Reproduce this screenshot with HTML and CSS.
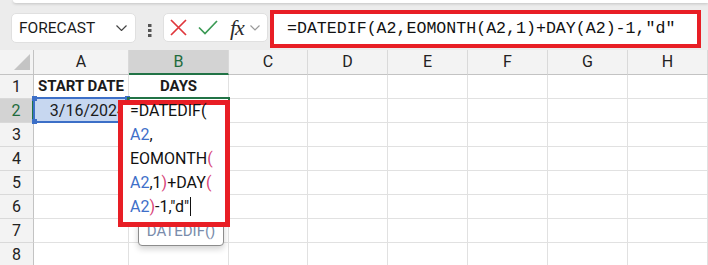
FILE: index.html
```html
<!DOCTYPE html>
<html lang="en">
<head>
<meta charset="UTF-8">
<title>DATEDIF days left in month</title>
<link rel="stylesheet" href="styles.css">
</head>
<body>
    <div class="top-edge"></div>
    <div class="formula-bar">
        <div class="name-box">
            <span>FORECAST</span>
            <svg class="chevron" width="11" height="6" viewBox="0 0 11 6"><path d="M0.5 0.5 L5.5 5.5 L10.5 0.5" fill="none" stroke="#444" stroke-width="1.2"/></svg>
        </div>
        <div class="grip">
            <svg width="4" height="13" viewBox="0 0 4 13"><rect x="0" y="0" width="3.5" height="3" fill="#555"/><rect x="0" y="5" width="3.5" height="3" fill="#555"/><rect x="0" y="10" width="3.5" height="3" fill="#555"/></svg>
        </div>
        <div class="fx-buttons">
            <svg class="btn-cancel" width="17" height="17" viewBox="0 0 17 17"><path d="M1 1 L16 16 M16 1 L1 16" stroke="#e0363c" stroke-width="1.7"/></svg>
            <svg class="btn-enter" width="20" height="15" viewBox="0 0 20 15"><path d="M1 7.5 L7 13.5 L19 1" fill="none" stroke="#3b9a55" stroke-width="1.7"/></svg>
            <span class="fx">fx</span>
            <svg class="chevron light" width="10" height="6" viewBox="0 0 10 6"><path d="M0.5 0.5 L5 5 L9.5 0.5" fill="none" stroke="#9a9a9a" stroke-width="1.2"/></svg>
        </div>
        <div class="formula-input">=DATEDIF(A2,EOMONTH(A2,1)+DAY(A2)-1,"d"</div>
    </div>

    <div class="sheet">
        <div class="corner">
            <svg width="16" height="16" viewBox="0 0 16 16"><polygon points="16,0 16,16 0,16" fill="#c4c4c4"/></svg>
        </div>
        <div class="col-head">A</div>
        <div class="col-head sel">B</div>
        <div class="col-head">C</div>
        <div class="col-head">D</div>
        <div class="col-head">E</div>
        <div class="col-head">F</div>
        <div class="col-head">G</div>
        <div class="col-head">H</div>

        <div class="row-head">1</div>
        <div class="cell title">START DATE</div>
        <div class="cell title">DAYS</div>
        <div class="cell"></div><div class="cell"></div><div class="cell"></div><div class="cell"></div><div class="cell"></div><div class="cell"></div>

        <div class="row-head sel">2</div>
        <div class="cell date">3/16/2024</div>
        <div class="cell"></div>
        <div class="cell"></div><div class="cell"></div><div class="cell"></div><div class="cell"></div><div class="cell"></div><div class="cell"></div>

        <div class="row-head">3</div>
        <div class="cell"></div><div class="cell"></div><div class="cell"></div><div class="cell"></div><div class="cell"></div><div class="cell"></div><div class="cell"></div><div class="cell"></div>
        <div class="row-head">4</div>
        <div class="cell"></div><div class="cell"></div><div class="cell"></div><div class="cell"></div><div class="cell"></div><div class="cell"></div><div class="cell"></div><div class="cell"></div>
        <div class="row-head">5</div>
        <div class="cell"></div><div class="cell"></div><div class="cell"></div><div class="cell"></div><div class="cell"></div><div class="cell"></div><div class="cell"></div><div class="cell"></div>
        <div class="row-head">6</div>
        <div class="cell"></div><div class="cell"></div><div class="cell"></div><div class="cell"></div><div class="cell"></div><div class="cell"></div><div class="cell"></div><div class="cell"></div>
        <div class="row-head">7</div>
        <div class="cell"></div><div class="cell"></div><div class="cell"></div><div class="cell"></div><div class="cell"></div><div class="cell"></div><div class="cell"></div><div class="cell"></div>
        <div class="row-head">8</div>
        <div class="cell"></div><div class="cell"></div><div class="cell"></div><div class="cell"></div><div class="cell"></div><div class="cell"></div><div class="cell"></div><div class="cell"></div>

        <!-- overlays: reference highlight, active cell, in-cell editor, hint -->
        <div class="ref-box">
            <span class="handle tl"></span><span class="handle tr"></span>
            <span class="handle bl"></span><span class="handle br"></span>
        </div>
        <div class="active-cell"></div>
        <div class="hint">DATEDIF()</div>
        <div class="editor">
            <div class="editor-text">
                <div>=DATEDIF(</div>
                <div><span class="ref">A2</span>,</div>
                <div>EOMONTH<span class="paren">(</span></div>
                <div><span class="ref">A2</span>,1<span class="paren">)</span>+DAY<span class="paren">(</span></div>
                <div><span class="ref">A2</span><span class="paren">)</span>-1,"d"<span class="caret"></span></div>
            </div>
        </div>
    </div>
</body>
</html>
```

FILE: styles.css
```css
body {
    margin: 0;
    width: 708px;
    height: 265px;
    overflow: hidden;
    background-color: #ececec;
    font-family: Roboto, "Liberation Sans", sans-serif;
    color: #1b1b1b;
}
.top-edge {
    height: 3px;
    margin-left: 13px;
    background-color: #fff;
    border-bottom-left-radius: 6px;
    box-shadow: 0 1px 3px rgba(0, 0, 0, .18);
}
.formula-bar {
    height: 47px;
    display: flex;
    align-items: flex-start;
}
.name-box {
    margin: 10px 0 0 11px;
    width: 125px;
    height: 30px;
    box-sizing: border-box;
    background-color: #fff;
    border: 1px solid #e0e0e0;
    border-radius: 5px;
    display: flex;
    align-items: center;
    justify-content: space-between;
    padding: 0 8px 0 7px;
    font-size: 15.5px;
}
.chevron {
    display: block;
}
.grip {
    width: 27px;
    height: 47px;
    display: flex;
    justify-content: center;
    padding-top: 21px;
    box-sizing: border-box;
}
.fx-buttons {
    margin-top: 10px;
    width: 105px;
    height: 29px;
    box-sizing: border-box;
    background-color: #fff;
    border: 1px solid #e0e0e0;
    border-radius: 5px;
    display: flex;
    align-items: center;
    padding-left: 6px;
}
.btn-enter {
    margin-left: 11px;
}
.fx {
    margin-left: 12px;
    font-family: "Liberation Serif", serif;
    font-style: italic;
    font-size: 22px;
    line-height: 22px;
    color: #2b2b2b;
    letter-spacing: -1px;
}
.chevron.light {
    margin-left: 6px;
}
.formula-input {
    margin: 7px 0 0 2px;
    width: 431px;
    height: 38px;
    box-sizing: border-box;
    border: 4px solid #e81e25;
    background-color: #fff;
    padding-left: 13px;
    font-family: "Liberation Mono", monospace;
    font-size: 16.6px;
    line-height: 30px;
    color: #111;
    white-space: nowrap;
}

.sheet {
    position: relative;
    display: grid;
    grid-template-columns: 34px 95px 100px 79px 80px 80px 80px 80px 80px;
    grid-template-rows: 25px repeat(8, 24px);
    background-color: #fff;
}
.sheet > div {
    box-sizing: border-box;
}
.corner {
    background-color: #f3f3f3;
    border-right: 1px solid #c3c3c3;
    border-bottom: 1px solid #c3c3c3;
    display: flex;
    align-items: flex-end;
    justify-content: flex-end;
    padding: 0 3px 4px 0;
}
.corner svg {
    display: block;
}
.col-head {
    background-color: #f3f3f3;
    border-right: 1px solid #d9d9d9;
    border-bottom: 1px solid #c3c3c3;
    text-align: center;
    font-size: 16px;
    line-height: 24px;
    color: #222;
}
.col-head.sel {
    background-color: #d3d3d3;
    color: #1e6b3c;
    border-bottom: 2px solid #217346;
    line-height: 23px;
}
.row-head {
    background-color: #f3f3f3;
    border-right: 1px solid #c3c3c3;
    border-bottom: 1px solid #d9d9d9;
    text-align: center;
    font-size: 16px;
    line-height: 23px;
    color: #222;
}
.row-head.sel {
    background-color: #d3d3d3;
    color: #1e6b3c;
    border-right: 2px solid #217346;
}
.cell {
    border-right: 1px solid #e1e1e1;
    border-bottom: 1px solid #e1e1e1;
    font-size: 16px;
    line-height: 23px;
    white-space: nowrap;
    overflow: hidden;
}
.cell.title {
    font-weight: bold;
    font-size: 15px;
    text-align: center;
}
.cell.date {
    background-color: #c7d7f0;
    text-align: right;
    padding-right: 2px;
}

.ref-box {
    position: absolute;
    left: 33px;
    top: 47px;
    width: 96px;
    height: 26px;
    box-sizing: border-box;
    border: 2px solid #3c6fc7;
}
.handle {
    position: absolute;
    width: 5px;
    height: 5px;
    background-color: #3c6fc7;
}
.handle.tl { left: -3px; top: -3px; }
.handle.tr { right: -3px; top: -3px; }
.handle.bl { left: -3px; bottom: -3px; }
.handle.br { right: -3px; bottom: -3px; }
.active-cell {
    position: absolute;
    left: 127px;
    top: 47px;
    width: 103px;
    height: 27px;
    box-sizing: border-box;
    border: 2px solid #217346;
}
.editor {
    position: absolute;
    left: 118px;
    top: 50px;
    width: 112px;
    height: 127px;
    box-sizing: border-box;
    border: 5px solid #e81e25;
    background-color: #fff;
    padding-left: 7px;
    font-size: 16px;
    line-height: 24px;
    color: #111;
    white-space: nowrap;
}
.editor-text {
    margin-top: -6px;
}
.ref {
    color: #3e6fc9;
}
.paren {
    color: #d8457a;
}
.caret {
    display: inline-block;
    width: 1px;
    height: 19px;
    margin-left: 1px;
    vertical-align: -4px;
    background-color: #111;
}
.hint {
    position: absolute;
    left: 138px;
    top: 170px;
    width: 86px;
    height: 26px;
    box-sizing: border-box;
    background-color: #fff;
    border: 1px solid #8c8c8c;
    border-radius: 4px;
    box-shadow: 0 3px 6px rgba(0, 0, 0, .18);
    text-align: center;
    font-size: 15px;
    line-height: 20px;
    color: #7a8cab;
}
```
